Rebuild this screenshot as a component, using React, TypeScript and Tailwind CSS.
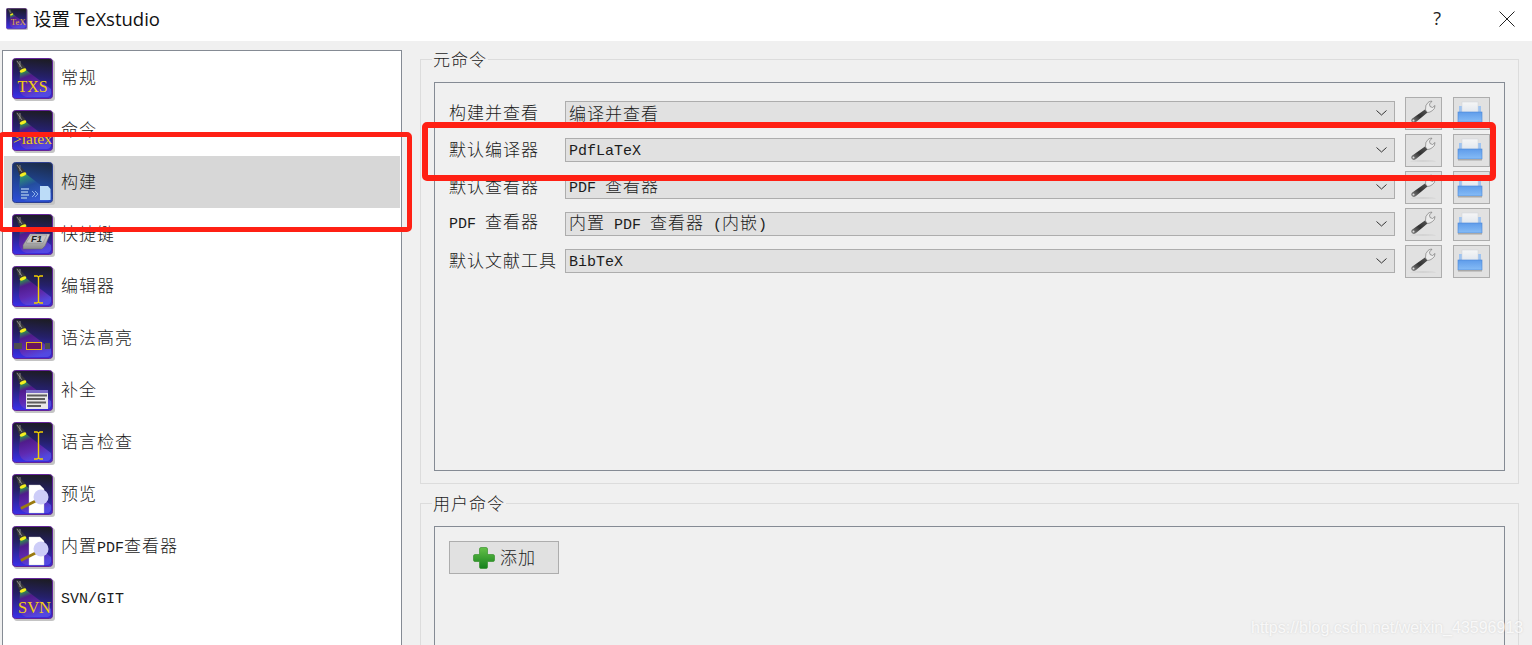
import React from "react";

const latin = "font-['Liberation_Mono',monospace] text-[15px] tracking-normal";
const cjk = "font-['Noto_Sans_CJK_SC',sans-serif] text-[17px] tracking-[1px] font-light";

function Mixed({ text }: { text: string }) {
  const parts = text.match(/[\x00-\x7f]+|[^\x00-\x7f]+/g) || [];
  return (
    <span className="whitespace-pre text-[#1c1c1c] leading-[24px]">
      {parts.map((p, i) => (
        <span key={i} className={/^[\x00-\x7f]/.test(p) ? latin : cjk}>
          {p}
        </span>
      ))}
    </span>
  );
}

type Kind = "txs" | "latex" | "build" | "f1" | "ibeam" | "hl" | "comp" | "preview" | "svn" | "tex";

function TxsIcon({ kind, small }: { kind: Kind; small?: boolean }) {
  const blue = kind === "build";
  return (
    <svg viewBox="0 0 43 43" className={small ? "w-[22px] h-[22px] shrink-0" : "w-[43px] h-[43px] shrink-0"}>
      <defs>
        <linearGradient id="txsBg" x1="0.7" y1="0" x2="0.6" y2="1">
          <stop offset="0" stopColor="#1c1c22" />
          <stop offset="0.45" stopColor="#25206a" />
          <stop offset="1" stopColor="#3a2ee0" />
        </linearGradient>
        <linearGradient id="txsBlue" x1="0.7" y1="0" x2="0.5" y2="1">
          <stop offset="0" stopColor="#1c2c48" />
          <stop offset="0.5" stopColor="#1f4390" />
          <stop offset="1" stopColor="#2a4cd0" />
        </linearGradient>
        <linearGradient id="txsCone" x1="0.05" y1="0" x2="0.5" y2="1">
          <stop offset="0" stopColor="#e8f020" />
          <stop offset="0.1" stopColor="#30a050" />
          <stop offset="0.28" stopColor="#5a1a90" />
          <stop offset="0.65" stopColor="#6a2ab0" />
          <stop offset="1" stopColor="#5a50e8" />
        </linearGradient>
        <linearGradient id="txsConeB" x1="0.05" y1="0" x2="0.5" y2="1">
          <stop offset="0" stopColor="#e8f020" />
          <stop offset="0.12" stopColor="#30a070" />
          <stop offset="0.45" stopColor="#2450a0" />
          <stop offset="1" stopColor="#3a60d8" />
        </linearGradient>
        <linearGradient id="plate" x1="0" y1="0" x2="0" y2="1">
          <stop offset="0" stopColor="#d8d8d8" />
          <stop offset="1" stopColor="#8c8c8c" />
        </linearGradient>
      </defs>
      <rect x="2" y="2" width="41" height="41" rx="3" fill="#c4c4c4" />
      <rect x="0.5" y="0.5" width="40" height="40" rx="3" fill={blue ? "url(#txsBlue)" : "url(#txsBg)"} stroke={blue ? "#2c3f90" : "#64249a"} />
      <path d="M8 15 L14 12 L39 31 Q40 39 35 39 L14 39 Q8 37 7 30 Z" fill={blue ? "url(#txsConeB)" : "url(#txsCone)"} opacity="0.8" />
      <path d="M4 2 L8 3 L9 5 L13 9 L14 11 L8 14 L6 9 Z" fill="#38383a" />
      <path d="M5 3 L10 10 M8 3 L8 9" stroke="#a8a8a8" strokeWidth="0.7" fill="none" />
      <ellipse cx="11" cy="12.500" rx="3.500" ry="1.600" fill="#f4f020" transform="rotate(-25 11 12.500)" />
      {kind === "txs" && <text x="20.5" y="34" textAnchor="middle" fontFamily="Liberation Serif" fontSize="16" fill="#f0d010">TXS</text>}
      {kind === "svn" && <text x="22.5" y="35" textAnchor="middle" fontFamily="Liberation Serif" fontSize="16.5" fill="#f0d010">SVN</text>}
      {kind === "latex" && <text x="20.5" y="34" textAnchor="middle" fontFamily="Liberation Serif" fontSize="15.5" fill="#f0d010">&gt;latex</text>}
      {kind === "tex" && <text x="24" y="34" textAnchor="middle" fontFamily="Liberation Serif" fontSize="17" fill="#e0b040">TeX</text>}
      {kind === "build" && (
        <g>
          <path d="M9 27h8M9 30h7M9 33h8M9 36h6" stroke="#7fa0d8" strokeWidth="2" />
          <path d="M20 29l3 3-3 3M23 29l3 3-3 3" stroke="#8cb0e8" strokeWidth="1" fill="none" />
          <path d="M28 24h8l2.500 3v11h-10.500z" fill="#bcdcf8" />
        </g>
      )}
      {kind === "f1" && (
        <g>
          <path d="M11 31 L18 20 H38 L33 32 L30 35 H11 Z" fill="url(#plate)" stroke="#666" strokeWidth="0.5" />
          <path d="M14 29 L19 21 H35 L31 29 Z" fill="#c4c4c4" stroke="#777" strokeWidth="0.4" />
          <text x="24.500" y="28" textAnchor="middle" fontFamily="Liberation Sans" fontStyle="italic" fontWeight="700" fontSize="9.500" fill="#222">F1</text>
        </g>
      )}
      {kind === "ibeam" && <path d="M22 10h3l1.500 1 1.500-1h3M26.500 11v25M22 37h3l1.500-1 1.500 1h3" stroke="#f2d000" strokeWidth="1.400" fill="none" />}
      {kind === "hl" && (
        <g>
          <rect x="2" y="25" width="8" height="6" fill="#4c4c50" />
          <rect x="33" y="25" width="5" height="6" fill="#4c4c50" />
          <rect x="14.500" y="24.500" width="15" height="7" fill="#6a1460" stroke="#e8b810" />
        </g>
      )}
      {kind === "comp" && (
        <g>
          <rect x="14" y="20" width="22" height="19" fill="#e8e8e8" />
          <rect x="14" y="20" width="22" height="3" fill="#7a6cc8" />
          <path d="M15 25.500h20M15 29h18M15 32.500h19M15 36h14" stroke="#5c5c5c" strokeWidth="2.200" />
        </g>
      )}
      {kind === "preview" && (
        <g>
          <path d="M17 11h11l4 4v24H17z" fill="#fff" stroke="#ccc" strokeWidth="0.4" />
          <rect x="8" y="29.500" width="17" height="2.800" rx="1" fill="#9a7a10" transform="rotate(-27 16 31)" />
          <circle cx="29" cy="23" r="7.500" fill="#cdcdf8" />
        </g>
      )}
    </svg>
  );
}

function Wrench() {
  return (
    <svg viewBox="0 0 33 29" className="w-[33px] h-[29px]">
      <defs>
        <linearGradient id="wr" x1="0" y1="1" x2="1" y2="0">
          <stop offset="0" stopColor="#8a8a8a" />
          <stop offset="0.5" stopColor="#333" />
          <stop offset="1" stopColor="#555" />
        </linearGradient>
      </defs>
      <ellipse cx="16" cy="25" rx="13" ry="0.500" fill="#c4c4c4" />
      <path d="M4.500 22.500 Q3.500 20.500 6 19 L18 10.500 L20.500 13.500 L9 23 Q6 25 4.500 22.500Z" fill="url(#wr)" />
      <path d="M18.500 11 Q18 6 21 3.500 Q23 1.800 25 2.200 L22.500 5 L23 7.500 L25.500 8.500 L28 6.500 Q28 10 25.500 11.500 Q23 13.500 20.500 13.500 Z" fill="#ececec" stroke="#6a6a6a" strokeWidth="0.600" />
      <circle cx="6.500" cy="21.500" r="1" fill="#ddd" />
    </svg>
  );
}

function SaveIcon() {
  return (
    <svg viewBox="0 0 33 29" className="w-[33px] h-[29px]">
      <defs>
        <linearGradient id="tray" x1="0" y1="0" x2="0" y2="1">
          <stop offset="0" stopColor="#5f9cea" />
          <stop offset="1" stopColor="#86bcf6" />
        </linearGradient>
        <linearGradient id="paper" x1="0" y1="0" x2="0" y2="1">
          <stop offset="0" stopColor="#f6f6f6" />
          <stop offset="1" stopColor="#e0e6ee" />
        </linearGradient>
      </defs>
      <path d="M4 7h3v7H4zM23 7h3v7h-3z" fill="#a0c4f0" />
      <rect x="7" y="3" width="16" height="11" fill="url(#paper)" stroke="#cfd4da" strokeWidth="0.500" />
      <rect x="3" y="13" width="24" height="10" fill="url(#tray)" stroke="#4a86d8" strokeWidth="0.600" />
      <rect x="3" y="23" width="24" height="1.500" fill="#a8a8a8" />
    </svg>
  );
}

function PlusIcon() {
  return (
    <svg viewBox="0 0 24 24" className="w-[24px] h-[24px]">
      <defs>
        <linearGradient id="plus" x1="0" y1="0" x2="0" y2="1">
          <stop offset="0" stopColor="#64c048" />
          <stop offset="1" stopColor="#14801c" />
        </linearGradient>
      </defs>
      <path d="M9 1.500h5q1.500 0 1.500 1.500V8.500H21q1.500 0 1.500 1.500v4q0 1.500-1.500 1.500h-5.500V21q0 1.500-1.500 1.500H9q-1.500 0-1.500-1.500v-5.500H3q-1.500 0-1.500-1.500v-4q0-1.500 1.500-1.500h4.500V3q0-1.500 1.500-1.500z" fill="url(#plus)" stroke="#2a8a20" strokeWidth="0.600" />
    </svg>
  );
}

const navItems: { label: string; kind: Kind; selected?: boolean; nudge: string }[] = [
  { label: "常规", kind: "txs", nudge: "mb-[2px]" },
  { label: "命令", kind: "latex", nudge: "mb-[2px]" },
  { label: "构建", kind: "build", selected: true, nudge: "mb-[2px]" },
  { label: "快捷键", kind: "f1", nudge: "mb-[2px]" },
  { label: "编辑器", kind: "ibeam", nudge: "mb-[2px]" },
  { label: "语法高亮", kind: "hl", nudge: "mb-[2px]" },
  { label: "补全", kind: "comp", nudge: "mb-[2px]" },
  { label: "语言检查", kind: "ibeam", nudge: "mb-[2px]" },
  { label: "预览", kind: "preview", nudge: "mb-[2px]" },
  { label: "内置PDF查看器", kind: "preview", nudge: "mt-[2px]" },
  { label: "SVN/GIT", kind: "svn", nudge: "mb-0" },
];

const rows = [
  ["构建并查看", "编译并查看"],
  ["默认编译器", "PdfLaTeX"],
  ["默认查看器", "PDF 查看器"],
  ["PDF 查看器", "内置 PDF 查看器 (内嵌)"],
  ["默认文献工具", "BibTeX"],
];

function ToolButton({ children }: { children: React.ReactNode }) {
  return (
    <div className="w-[37px] h-[33px] shrink-0 border border-[#adadad] bg-[#e1e1e1] flex items-center justify-center">
      {children}
    </div>
  );
}

function Legend({ children }: { children: string }) {
  return (
    <legend className="ml-[-2px] px-[1px] h-[20px] flex items-center">
      <Mixed text={children} />
    </legend>
  );
}

export default function App() {
  return (
    <div className="relative w-[1532px] h-[645px] overflow-hidden bg-[#f0f0f0]">
      <header className="h-[41px] bg-white flex items-center pl-[6px] pb-[4px]">
        <TxsIcon kind="tex" small />
        <span className="ml-[5px] text-[18.500px] text-[#111] font-['Open_Sans','Noto_Sans_CJK_SC',sans-serif]">设置 TeXstudio</span>
        <span className="ml-auto text-[18px] text-[#222] font-['Open_Sans',sans-serif]">?</span>
        <svg viewBox="0 0 16 16" className="w-[16px] h-[16px] ml-[58px] mr-[17px]">
          <path d="M0.500 0.500 L15.500 15.500 M15.500 0.500 L0.500 15.500" stroke="#222" strokeWidth="1" />
        </svg>
      </header>

      <div className="flex h-[604px]">
        <nav className="ml-[2px] mt-[9px] w-[400px] h-[620px] shrink-0 bg-white border border-[#858b94] pt-[1px] px-[1px]">
          {navItems.map((it) => (
            <div key={it.label} className={`h-[52px] flex items-center ${it.selected ? "bg-[#d7d7d7]" : ""}`}>
              <div className="ml-[8px] mt-[2px] w-[43px] flex">
                <TxsIcon kind={it.kind} />
              </div>
              <div className={`ml-[6px] ${it.nudge}`}>
                <Mixed text={it.label} />
              </div>
            </div>
          ))}
        </nav>

        <main className="ml-[18px] w-[1099px] pt-[8px] shrink-0">
          <fieldset className="border border-[#dcdcdc] px-[13px] pb-[12px] pt-[13px] h-[435px] min-w-0">
            <Legend>元命令</Legend>
            <div className="h-[389px] border border-[#858b94] pt-[14px] pl-[14px] flex flex-col gap-[4px]">
              {rows.map(([label, value]) => (
                <div key={label} className="flex items-start h-[33px]">
                  <div className="w-[116px] h-[24px] mt-[3px] flex items-center shrink-0">
                    <Mixed text={label} />
                  </div>
                  <div className="mt-[4px] w-[830px] h-[24px] shrink-0 border border-[#adadad] bg-[#e1e1e1] pl-[3px] flex items-center">
                    <Mixed text={value} />
                    <svg viewBox="0 0 11 6" className="ml-auto mr-[7px] w-[11px] h-[6px]">
                      <path d="M0.500 0.500 L5.500 5 L10.500 0.500" fill="none" stroke="#333" strokeWidth="1" />
                    </svg>
                  </div>
                  <div className="ml-[10px]">
                    <ToolButton><Wrench /></ToolButton>
                  </div>
                  <div className="ml-[11px]">
                    <ToolButton><SaveIcon /></ToolButton>
                  </div>
                </div>
              ))}
            </div>
          </fieldset>

          <fieldset className="mt-[9px] border border-[#dcdcdc] px-[13px] pt-[13px] h-[300px] min-w-0">
            <Legend>用户命令</Legend>
            <div className="h-[260px] border border-[#858b94] pt-[14px] pl-[14px]">
              <div className="w-[110px] h-[33px] border border-[#adadad] bg-[#e1e1e1] flex items-center justify-center gap-[4px]">
                <PlusIcon />
                <Mixed text="添加" />
              </div>
            </div>
          </fieldset>
        </main>
      </div>

      <div className="absolute left-[-2px] top-[132px] w-[414px] h-[100px] border-[5px] border-[#ff2014] rounded-[5px]" />
      <div className="absolute left-[422px] top-[122px] w-[1074px] h-[59px] border-[6px] border-[#ff2014] rounded-[5px]" />
      <div className="absolute left-[1251px] top-[618px] text-[16px] leading-[20px] whitespace-nowrap font-['Liberation_Sans',sans-serif] text-white/80 [text-shadow:0_0_2px_rgba(150,150,150,0.35)]">
        https://blog.csdn.net/weixin_43596913
      </div>
    </div>
  );
}
